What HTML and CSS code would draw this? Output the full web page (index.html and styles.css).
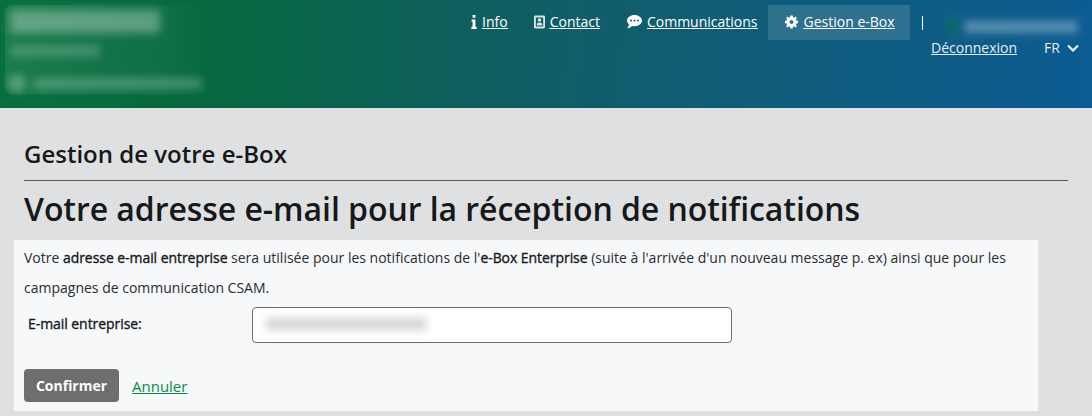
FILE: index.html
```html
<!DOCTYPE html>
<html lang="fr">
<head>
    <meta charset="UTF-8" />
    <meta name="viewport" content="width=device-width, initial-scale=1.0" />
    <title>Gestion de votre e-Box</title>
    <link rel="stylesheet" href="styles.css">
</head>
<body>
    <header class="topbar">
        <div class="org">
            <div class="org-blur">
                <div class="org-name"></div>
                <div class="org-sub"></div>
                <div class="org-mail"><span class="org-dot"></span><span class="org-addr"></span></div>
            </div>
        </div>
        <div class="topnav">
            <nav class="menu">
                <a class="menu-item" href="#">
                    <svg class="icon icon-info" viewBox="0 0 6 14"><path d="M1.600 0h2.800v2.800H1.600zM.6 4.600h3.800v7.200h1.200V14H.4v-2.200h1.200V6.800h-1z"/></svg>
                    <span>Info</span>
                </a>
                <a class="menu-item" href="#">
                    <svg class="icon icon-contact" viewBox="0 0 12 14"><path fill-rule="evenodd" d="M1.500 0h9A1.500 1.500 0 0 1 12 1.500v11a1.500 1.500 0 0 1-1.500 1.500h-9A1.500 1.500 0 0 1 0 12.500v-11A1.500 1.500 0 0 1 1.500 0zM2 2v10h8V2zM6 3a1.800 1.800 0 1 1 0 3.800A1.800 1.800 0 0 1 6 3zM3 9.800c0-1.300 1-2.200 3-2.200s3 .9 3 2.200v.9H3z"/></svg>
                    <span>Contact</span>
                </a>
                <a class="menu-item" href="#">
                    <svg class="icon icon-comment" viewBox="0 0 15 13"><path fill-rule="evenodd" d="M7.500 0C11.600 0 15 2.500 15 5.600s-3.400 5.600-7.500 5.600c-.9 0-1.700-.1-2.500-.3C3.900 11.900 2.400 13 .6 13c-.3 0-.4-.3-.2-.5.9-.9 1.500-2 1.700-3.100C.8 8.400 0 7.100 0 5.600 0 2.500 3.400 0 7.500 0zM4 4.600a1 1 0 1 0 0 2 1 1 0 0 0 0-2zm3.500 0a1 1 0 1 0 0 2 1 1 0 0 0 0-2zm3.500 0a1 1 0 1 0 0 2 1 1 0 0 0 0-2z"/></svg>
                    <span>Communications</span>
                </a>
                <a class="menu-item menu-active" href="#">
                    <svg class="icon icon-cog" viewBox="0 0 14 14"><path fill-rule="evenodd" d="M5.700 0h2.600l.4 1.900 1 .4L11.400 1.200l1.400 1.400-1.100 1.700.4 1L14 5.700v2.600l-1.900.4-.4 1 1.100 1.700-1.400 1.400-1.700-1.100-1 .4-.4 1.900H5.700l-.4-1.900-1-.4-1.700 1.100-1.400-1.400 1.100-1.700-.4-1L0 8.300V5.700l1.900-.4.4-1L1.200 2.600l1.400-1.400 1.700 1.100 1-.4zM7 4.800a2.200 2.200 0 1 0 0 4.400 2.200 2.200 0 0 0 0-4.400z"/></svg>
                    <span>Gestion e-Box</span>
                </a>
                <span class="menu-sep"></span>
                <div class="user-blur"><span class="user-dot"></span><span class="user-name"></span></div>
            </nav>
            <div class="session">
                <a class="logout" href="#">Déconnexion</a>
                <span class="lang">FR
                    <svg class="chevron" viewBox="0 0 12 8"><path d="M1 1.500l5 5 5-5" fill="none" stroke="currentColor" stroke-width="2.200"/></svg>
                </span>
            </div>
        </div>
    </header>

    <main class="content">
        <h2 class="section-title">Gestion de votre e-Box</h2>
        <h1 class="page-title">Votre adresse e-mail pour la réception de notifications</h1>
        <section class="panel">
            <p class="intro">Votre <b>adresse e-mail entreprise</b> sera utilisée pour les notifications de l'<b>e-Box Enterprise</b> (suite à l'arrivée d'un nouveau message p. ex) ainsi que pour les campagnes de communication CSAM.</p>
            <div class="field">
                <label class="field-label" for="email">E-mail entreprise:</label>
                <div class="field-input" id="email"><span class="field-blur"></span></div>
            </div>
            <div class="actions">
                <button class="btn-confirm">Confirmer</button>
                <a class="cancel" href="#">Annuler</a>
            </div>
        </section>
    </main>
</body>
</html>
```

FILE: styles.css
```css
* { margin: 0; padding: 0; box-sizing: border-box; }
body {
    background: #dfe0e2;
    color: #16181a;
    font-family: 'Open Sans', 'Noto Sans', sans-serif;
    font-size: 14px;
    overflow: hidden;
}
.topbar {
    height: 108px;
    display: flex;
    justify-content: space-between;
    background: linear-gradient(95deg, #07703d 0%, #06683f 20%, #0f5f5e 42%, #105c78 68%, #0c5b92 100%);
    overflow: hidden;
}
.org {
    padding: 5px 0 0 5px;
}
.org-blur {
    width: 205px;
    height: 89px;
    padding: 5px 5px;
    background: linear-gradient(90deg, rgba(255, 255, 255, 0.08), rgba(255, 255, 255, 0.03) 80%, rgba(255, 255, 255, 0));
    border-radius: 8px;
}
.org-name {
    width: 150px;
    height: 23px;
    margin-bottom: 12px;
    background: rgba(255, 255, 255, 0.32);
    filter: blur(5px);
}
.org-sub {
    width: 90px;
    height: 12px;
    margin-bottom: 17px;
    background: rgba(255, 255, 255, 0.2);
    filter: blur(4px);
}
.org-mail {
    display: flex;
    align-items: center;
    gap: 8px;
    filter: blur(4px);
}
.org-dot {
    width: 18px;
    height: 18px;
    margin-left: -2px;
    border-radius: 50%;
    background: rgba(255, 255, 255, 0.28);
}
.org-addr {
    width: 168px;
    height: 11px;
    background: rgba(255, 255, 255, 0.24);
}
.topnav {
    width: 632px;
    flex: none;
    display: flex;
    flex-direction: column;
    padding-top: 5px;
}
.menu {
    display: flex;
    align-items: center;
    height: 35px;
}
.menu-item {
    display: flex;
    align-items: center;
    gap: 5px;
    height: 35px;
    padding: 0 10px 2px 11px;
    color: #fff;
    white-space: nowrap;
    flex: none;
}
.menu-item span {
    text-decoration: underline;
}
.menu-active {
    width: 142px;
    padding: 0 0 2px 17px;
    gap: 6px;
    background: rgba(255, 255, 255, 0.13);
}
.icon {
    fill: #fff;
    flex: none;
}
.icon-info { width: 6px; height: 14px; }
.icon-contact { width: 11px; height: 14px; margin-left: 5px; opacity: 0.85; }
.icon-comment { width: 15px; height: 13px; margin-left: 6px; }
.icon-cog { width: 13px; height: 14px; }
.menu-sep {
    width: 1px;
    height: 14px;
    margin: 0 22px 0 12px;
    background: #fff;
    flex: none;
}
.user-blur {
    display: flex;
    align-items: center;
    gap: 7px;
    width: 140px;
    height: 26px;
    margin-top: 8px;
    filter: blur(3px);
    background: rgba(255, 255, 255, 0.03);
    flex: none;
}
.user-dot {
    width: 12px;
    height: 14px;
    margin-left: 1px;
    background: #0a6a62;
    border-radius: 50%;
}
.user-name {
    width: 112px;
    height: 12px;
    background: rgba(255, 255, 255, 0.26);
}
.session {
    display: flex;
    align-items: center;
    gap: 27px;
    padding-left: 471px;
    height: 15px;
    color: #e6eef3;
}
.logout {
    color: #e6eef3;
    text-decoration: underline;
    white-space: nowrap;
}
.lang {
    display: flex;
    align-items: center;
    gap: 7px;
}
.chevron {
    width: 12px;
    height: 8px;
}
.content {
    padding: 30px 24px 0;
}
.section-title {
    font-size: 24px;
    font-weight: 600;
    line-height: 32px;
    padding-bottom: 10px;
    border-bottom: 1px solid #58595b;
}
.page-title {
    font-size: 32px;
    font-weight: 600;
    line-height: 44px;
    margin-top: 6px;
    letter-spacing: -0.06px;
    white-space: nowrap;
}
.panel {
    width: 1024px;
    height: 171px;
    margin: 9px 0 0 -10px;
    padding: 3px 10px 0;
    background: #f6f8fa;
}
.intro {
    line-height: 30px;
    color: #2a2c2e;
}
.intro b {
    font-weight: 400;
    color: #16181a;
    letter-spacing: -0.06px;
    -webkit-text-stroke: 0.35px #16181a;
}
.field {
    display: flex;
    margin-top: 4px;
    padding-left: 4px;
}
.field-label {
    width: 224px;
    padding-top: 7px;
    line-height: 20px;
    letter-spacing: -0.06px;
    -webkit-text-stroke: 0.35px #16181a;
}
.field-input {
    width: 480px;
    height: 36px;
    padding: 5px;
    background: #fff;
    border: 1px solid #6b6c6e;
    border-radius: 4px;
}
.field-blur {
    display: block;
    width: 160px;
    height: 12px;
    margin: 5px 0 0 8px;
    background: #d2d3d6;
    filter: blur(4px);
}
.actions {
    display: flex;
    align-items: center;
    gap: 13px;
    margin-top: 26px;
}
.btn-confirm {
    width: 95px;
    height: 33px;
    background: #6e6e6e;
    color: #fff;
    border: none;
    border-radius: 4px;
    font-family: inherit;
    font-size: 14px;
    font-weight: 700;
}
.cancel {
    color: #0a8a45;
    font-size: 15px;
    text-decoration: underline;
}
```
